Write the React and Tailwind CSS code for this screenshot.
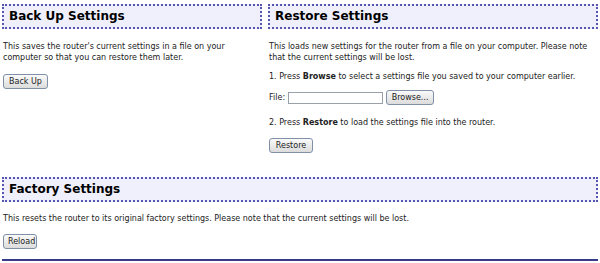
import React from 'react';

function Header({ children }) {
    return (
        <div className="h-[25px] flex items-center px-[5px] bg-[#f0f0fc] border-2 border-dotted border-[#5656b0]">
            <h2 className="text-[12px] font-bold text-black">{children}</h2>
        </div>
    );
}

function Btn({ children, className = '' }) {
    return (
        <button className={`h-[15px] px-[4px] text-[8px] leading-none text-[#222] bg-gradient-to-b from-[#fafafa] to-[#dcdcdc] border border-[#8090a8] rounded-[3px] ${className}`}>
            {children}
        </button>
    );
}

export default function App() {
    return (
        <div className="w-[600px] h-[263px] bg-white text-[8px] leading-[11px] text-[#222] px-[2px] pt-[4px] font-['DejaVu_Sans',Verdana,sans-serif]">
            <div className="flex gap-[6px]">
                {/* Back Up */}
                <div className="w-[260px]">
                    <Header>Back Up Settings</Header>
                    <p className="mt-[12px] pl-[1px]">
                        This saves the router's current settings in a file on your computer so that you can restore them later.
                    </p>
                    <Btn className="mt-[11px] ml-[1px] w-[45px]">Back Up</Btn>
                </div>

                {/* Restore */}
                <div className="flex-1">
                    <Header>Restore Settings</Header>
                    <p className="mt-[12px] pl-[1px]">
                        This loads new settings for the router from a file on your computer. Please note that the current settings will be lost.
                    </p>
                    <p className="mt-[8px] pl-[1px]">
                        1. Press <b>Browse</b> to select a settings file you saved to your computer earlier.
                    </p>
                    <div className="mt-[8px] pl-[1px] flex items-center gap-[3px]">
                        <span>File:</span>
                        <input type="text" className="w-[95px] h-[12px] border border-[#9aa0aa] bg-white" />
                        <Btn className="w-[48px] h-[12px]">Browse...</Btn>
                    </div>
                    <p className="mt-[12px] pl-[1px]">
                        2. Press <b>Restore</b> to load the settings file into the router.
                    </p>
                    <Btn className="mt-[10px] ml-[1px] w-[44px]">Restore</Btn>
                </div>
            </div>

            {/* Factory */}
            <div className="mt-[24px]">
                <Header>Factory Settings</Header>
                <p className="mt-[11px] pl-[1px]">
                    This resets the router to its original factory settings. Please note that the current settings will be lost.
                </p>
                <Btn className="mt-[10px] ml-[1px] w-[34px] block">Reload</Btn>
                <div className="mt-[10px] h-[2px] bg-[#3a3a8a]" />
            </div>
        </div>
    );
}
